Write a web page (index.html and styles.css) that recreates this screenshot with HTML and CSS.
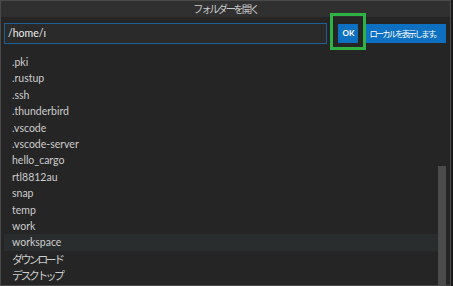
FILE: index.html
```html
<!DOCTYPE html>
<html lang="ja">
<head>
    <meta charset="UTF-8">
    <meta name="viewport" content="width=device-width, initial-scale=1.0">
    <title>フォルダーを開く</title>
    <link rel="stylesheet" href="styles.css">
</head>
<body>
    <div class="dialog">
        <div class="title">フォルダーを開く</div>

        <div class="input-row">
            <div class="path-input">/home/ı</div>
            <button class="button ok">OK</button>
            <button class="button local">ローカルを表示します。</button>
            <div class="highlight-box"></div>
        </div>

        <div class="list">
            <div class="row">.pki</div>
            <div class="row">.rustup</div>
            <div class="row">.ssh</div>
            <div class="row">.thunderbird</div>
            <div class="row">.vscode</div>
            <div class="row">.vscode-server</div>
            <div class="row">hello_cargo</div>
            <div class="row">rtl8812au</div>
            <div class="row">snap</div>
            <div class="row">temp</div>
            <div class="row">work</div>
            <div class="row hover">workspace</div>
            <div class="row ja">ダウンロード</div>
            <div class="row ja">デスクトップ</div>
            <div class="scrollbar"></div>
        </div>
    </div>
</body>
</html>
```

FILE: styles.css
```css
body {
    margin: 0;
    padding: 0;
    background: #1a1a1a;
    font-family: "Lato", "Noto Sans CJK JP", sans-serif;
    color: #cccccc;
}

.dialog {
    position: relative;
    width: 449px;
    height: 284px;
    background: #252526;
    border: 1px solid #4a4a4a;
    overflow: hidden;
}

.title {
    height: 16px;
    line-height: 16px;
    background: #303031;
    text-align: center;
    font-family: "Noto Sans CJK JP", sans-serif;
    font-size: 10.5px;
    letter-spacing: -2.4px;
    color: #c8c8c8;
}

.input-row {
    position: relative;
    display: flex;
    align-items: center;
    padding: 5px 4px 0 3px;
    height: 22px;
}

.path-input {
    width: 320px;
    height: 19px;
    line-height: 19px;
    background: #2a2a2b;
    border: 1px solid #1d5f93;
    color: #ececec;
    font-size: 10.5px;
    padding-left: 3px;
    box-sizing: content-box;
}

.button {
    height: 19px;
    border: none;
    background: #0e70c0;
    color: white;
    font-family: "Lato", "Noto Sans CJK JP", sans-serif;
    font-size: 8px;
    font-weight: bold;
    padding: 0;
    white-space: nowrap;
}

.ok {
    width: 20px;
    margin-left: 11px;
}

.local {
    width: 80px;
    margin-left: 8px;
    font-family: "Noto Sans CJK JP", sans-serif;
    font-weight: normal;
    font-size: 8.3px;
    letter-spacing: -1.8px;
    text-align: left;
    padding-left: 3px;
    overflow: visible;
}

.highlight-box {
    position: absolute;
    left: 329px;
    top: -4px;
    width: 30px;
    height: 31px;
    border: 3px solid #2fb344;
}

.list {
    position: relative;
    margin: 10px 4px 0 3px;
    height: 240px;
}

.row {
    height: 16.4px;
    line-height: 16.4px;
    padding-left: 8px;
    font-size: 10.5px;
    color: #cccccc;
}

.row.ja {
    font-family: "Noto Sans CJK JP", sans-serif;
    font-size: 11px;
    letter-spacing: -2.6px;
}

.row.hover {
    background: #2a2d2e;
    margin-right: 6px;
}

.scrollbar {
    position: absolute;
    right: 0;
    top: 112px;
    width: 8px;
    height: 130px;
    background: #4b4b4b;
}
```
